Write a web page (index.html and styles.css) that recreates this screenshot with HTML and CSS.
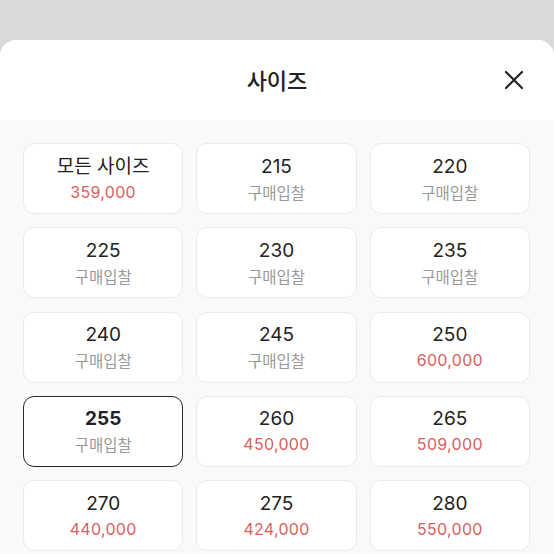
FILE: index.html
```html
<!DOCTYPE html>
<html lang="ko">
<head>
    <meta charset="UTF-8">
    <meta name="viewport" content="width=device-width, initial-scale=1.0">
    <title>사이즈</title>
    <link rel="stylesheet" href="styles.css">
</head>
<body>
    <div class="sheet">
        <div class="sheet-header">
            <h1>사이즈</h1>
            <button class="close" aria-label="닫기">
                <svg width="20" height="20" viewBox="0 0 20 20">
                    <path d="M2 2 L18 18 M18 2 L2 18" stroke="#222" stroke-width="2.2" stroke-linecap="round" fill="none"/>
                </svg>
            </button>
        </div>
        <div class="sheet-body">
            <div class="size-grid">
                <div class="size"><span class="label">모든 사이즈</span><span class="price">359,000</span></div>
                <div class="size"><span class="label">215</span><span class="bid">구매입찰</span></div>
                <div class="size"><span class="label">220</span><span class="bid">구매입찰</span></div>
                <div class="size"><span class="label">225</span><span class="bid">구매입찰</span></div>
                <div class="size"><span class="label">230</span><span class="bid">구매입찰</span></div>
                <div class="size"><span class="label">235</span><span class="bid">구매입찰</span></div>
                <div class="size"><span class="label">240</span><span class="bid">구매입찰</span></div>
                <div class="size"><span class="label">245</span><span class="bid">구매입찰</span></div>
                <div class="size"><span class="label">250</span><span class="price">600,000</span></div>
                <div class="size selected"><span class="label">255</span><span class="bid">구매입찰</span></div>
                <div class="size"><span class="label">260</span><span class="price">450,000</span></div>
                <div class="size"><span class="label">265</span><span class="price">509,000</span></div>
                <div class="size"><span class="label">270</span><span class="price">440,000</span></div>
                <div class="size"><span class="label">275</span><span class="price">424,000</span></div>
                <div class="size"><span class="label">280</span><span class="price">550,000</span></div>
            </div>
        </div>
    </div>
</body>
</html>
```

FILE: styles.css
```css
html, body {
    height: 100%;
}
body {
    margin: 0;
    background-color: #d9d9d9;
    font-family: Inter, "Noto Sans CJK KR", sans-serif;
    overflow: hidden;
}
.sheet {
    margin-top: 40px;
    height: 514px;
    background-color: #f9f9f9;
    border-radius: 16px 16px 0 0;
    overflow: hidden;
}
.sheet-header {
    position: relative;
    height: 80px;
    background-color: #ffffff;
    display: flex;
    justify-content: center;
    align-items: center;
}
h1 {
    margin: 0;
    font-family: "Noto Sans CJK KR", sans-serif;
    font-size: 22px;
    font-weight: 500;
    color: #222;
    line-height: 1;
    padding-bottom: 2px;
}
.close {
    position: absolute;
    right: 30px;
    top: 30px;
    width: 20px;
    height: 20px;
    padding: 0;
    border: none;
    background: none;
    cursor: pointer;
}
.close svg {
    display: block;
}
.sheet-body {
    padding: 23px 24px 0 23px;
}
.size-grid {
    display: grid;
    grid-template-columns: repeat(3, 1fr);
    grid-auto-rows: 71px;
    gap: 13.25px 13px;
}
.size {
    background-color: #ffffff;
    border: 1px solid #ebebeb;
    border-radius: 11px;
    display: flex;
    flex-direction: column;
    justify-content: center;
    align-items: center;
    gap: 2px;
}
.size.selected {
    border: 1.5px solid #2a2a2a;
}
.label {
    font-size: 19px;
    line-height: 24px;
    color: #222;
}
.selected .label {
    font-weight: 700;
}
.bid, .price {
    line-height: 22px;
}
.bid {
    font-family: "Noto Sans CJK KR", sans-serif;
    font-size: 15.5px;
    color: #999;
}
.price {
    font-size: 16px;
    letter-spacing: 0.3px;
    color: #d8605e;
}
```
